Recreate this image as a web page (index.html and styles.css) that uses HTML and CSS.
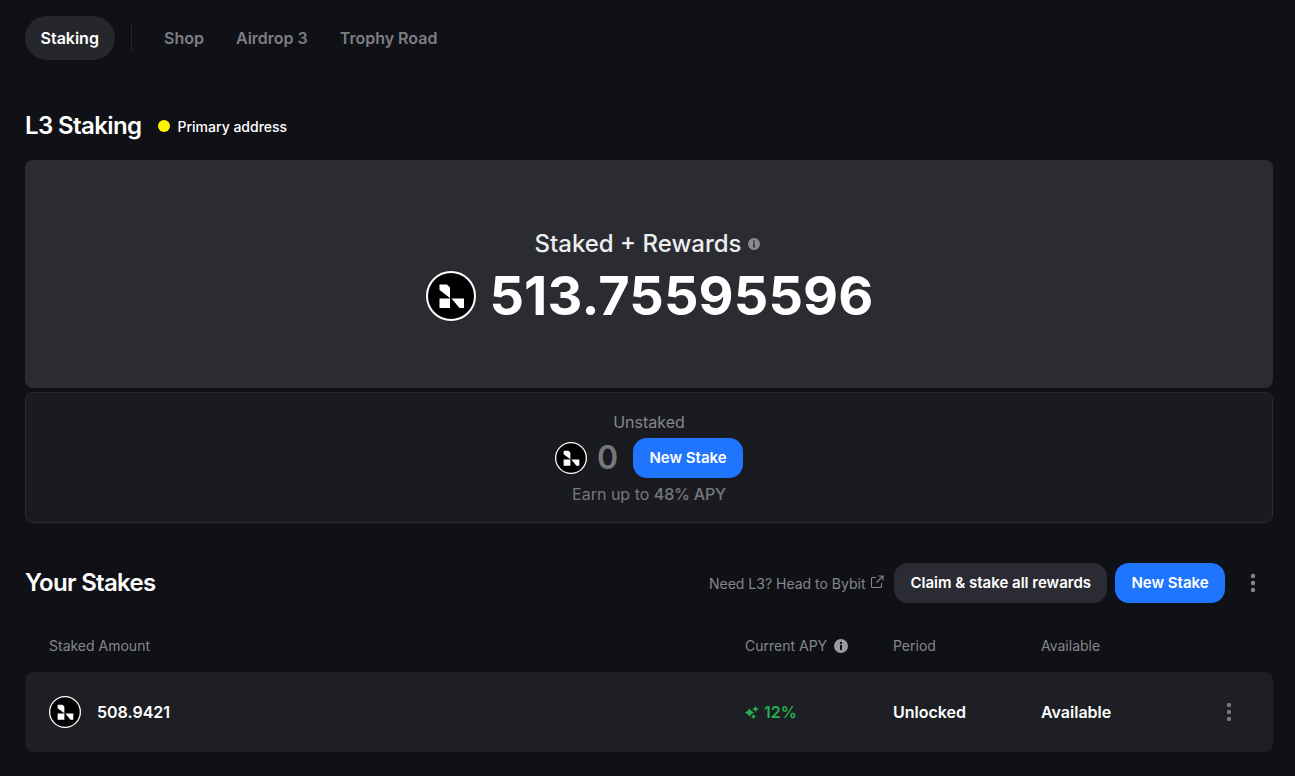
FILE: index.html
```html
<!DOCTYPE html>
<html lang="en">
<head>
<meta charset="utf-8">
<title>L3 Staking</title>
<link rel="stylesheet" href="styles.css">
</head>
<body>
<svg class="defs" width="0" height="0" aria-hidden="true">
  <symbol id="l3" viewBox="0 0 50 50">
    <circle cx="25" cy="25" r="24" fill="#000" stroke="#fff" stroke-width="2"/>
    <path fill="#fff" d="M13.500 13.500h7.500l3 3v10.500l-10.500-8zM13.500 27.500h10.500v9.500h-10.500zM25.500 27.500h12.500v9.500h-4.500z"/>
  </symbol>
  <symbol id="kebab" viewBox="0 0 6 20">
    <circle cx="3" cy="3" r="2.200"/><circle cx="3" cy="10" r="2.200"/><circle cx="3" cy="17" r="2.200"/>
  </symbol>
  <symbol id="info" viewBox="0 0 14 14">
    <path fill-rule="evenodd" d="M7 0a7 7 0 1 1 0 14A7 7 0 0 1 7 0zM6 6v5h2V6zM7 2.800a1.200 1.200 0 1 0 0 2.400 1.200 1.200 0 0 0 0-2.400z"/>
  </symbol>
</svg>
<nav class="nav">
  <a class="tab tab-active">Staking</a>
  <span class="nav-divider"></span>
  <a class="tab">Shop</a>
  <a class="tab">Airdrop 3</a>
  <a class="tab">Trophy Road</a>
</nav>
<header class="title-row">
  <h1 class="h-large">L3 Staking</h1>
  <span class="dot"></span>
  <span class="address">Primary address</span>
</header>
<section class="card-total">
  <div class="total-label">Staked + Rewards <svg class="info-small"><use href="#info"/></svg></div>
  <div class="total-value"><svg class="logo-large"><use href="#l3"/></svg><span>513.75595596</span></div>
</section>
<section class="card-unstaked">
  <div class="unstaked-label">Unstaked</div>
  <div class="unstaked-row">
    <svg class="logo-mid"><use href="#l3"/></svg>
    <span class="unstaked-value">0</span>
    <button class="btn btn-blue">New Stake</button>
  </div>
  <div class="earn">Earn up to <strong>48% APY</strong></div>
</section>
<section class="stakes-head">
  <h2 class="h-large h-tight">Your Stakes</h2>
  <div class="stakes-actions">
    <a class="bybit">Need L3? Head to Bybit
      <svg class="ext" viewBox="0 0 14 14" fill="none" stroke="currentColor" stroke-width="1.100"><path d="M6 2.500H2.500a1 1 0 0 0-1 1v8a1 1 0 0 0 1 1h8a1 1 0 0 0 1-1V8M8.500 1h4.500v4.500M13 1 6.500 7.500"/></svg>
    </a>
    <button class="btn btn-dark">Claim &amp; stake all rewards</button>
    <button class="btn btn-blue">New Stake</button>
    <svg class="kebab-head"><use href="#kebab"/></svg>
  </div>
</section>
<div class="grid table-head">
  <span>Staked Amount</span>
  <span class="apy-head">Current APY <svg class="info-head"><use href="#info"/></svg></span>
  <span>Period</span>
  <span>Available</span>
</div>
<div class="grid table-row">
  <span class="amount"><svg class="logo-small"><use href="#l3"/></svg>508.9421</span>
  <span class="apy">
    <svg class="spark" viewBox="0 0 14 13" fill="currentColor"><path d="M4.500 2.500 6.200 4.800 9 6.500 6.200 8.200 4.500 10.500 2.800 8.200 0 6.500 2.800 4.800zM10.500 0l1.100 1.900 2.400 1.100-2.400 1.100-1.100 1.900-1.100-1.900-2.400-1.100 2.400-1.100zM8.500 8l1 1.500 1.500 1-1.500 1-1 1.500-1-1.500-1.500-1 1.500-1z"/></svg>12%
  </span>
  <span>Unlocked</span>
  <span>Available</span>
  <svg class="kebab-row"><use href="#kebab"/></svg>
</div>
</body>
</html>
```

FILE: styles.css
```css
* { box-sizing: border-box; }
html, body { height: 100%; }
body {
  margin: 0;
  padding: 16px 22px 0 25px;
  background: #101116;
  color: #fff;
  font-family: Inter, "Liberation Sans", sans-serif;
  overflow: hidden;
}
.defs { position: absolute; }
.nav { display: flex; align-items: center; height: 44px; }
.tab {
  font-size: 16px;
  font-weight: 600;
  color: #7d7e84;
  padding: 0 16px;
  line-height: 44px;
}
.tab-active {
  color: #fff;
  background: #26272c;
  border-radius: 22px;
  padding: 0 16px 0 15.500px;
  width: 90px;
}
.nav-divider { width: 1px; height: 28px; background: #26272c; margin: 0 16px; }
.title-row { display: flex; align-items: center; margin-top: 50px; height: 32px; }
.h-large {
  margin: 0;
  font-size: 24px;
  font-weight: 600;
  letter-spacing: -0.6px;
  line-height: 32px;
}
.h-tight { letter-spacing: -0.7px; }
.dot { width: 12px; height: 12px; border-radius: 50%; background: #fff200; margin-left: 16px; }
.address { font-size: 14px; font-weight: 500; margin-left: 8px; }
.card-total {
  margin-top: 18px;
  height: 228px;
  background: #2b2c32;
  border-radius: 8px;
  display: flex;
  flex-direction: column;
  align-items: center;
  padding-top: 68px;
}
.total-label {
  display: flex;
  align-items: center;
  gap: 6px;
  font-size: 24px;
  font-weight: 500;
  line-height: 32px;
  color: #eeeef0;
  padding-right: 4px;
}
.info-small { width: 12px; height: 12px; fill: #8a8b90; }
.total-value {
  display: flex;
  align-items: center;
  gap: 13px;
  font-size: 54px;
  font-weight: 700;
  letter-spacing: 0.15px;
  line-height: 56px;
  margin-top: 8px;
  padding-left: 2px;
}
.logo-large { width: 50px; height: 50px; }
.card-unstaked {
  margin-top: 4px;
  height: 131px;
  background: #1a1b20;
  border: 1px solid #2a2b31;
  border-radius: 8px;
  display: flex;
  flex-direction: column;
  align-items: center;
  padding-top: 17px;
}
.unstaked-label { font-size: 16px; line-height: 24px; color: #85868c; }
.unstaked-row { display: flex; align-items: center; margin-top: 4px; height: 40px; }
.logo-mid { width: 32px; height: 32px; }
.unstaked-value { font-size: 32px; font-weight: 600; color: #77787e; margin: 0 15px 0 10px; line-height: 40px; }
.earn { font-size: 16px; line-height: 24px; color: #77787e; margin-top: 4px; }
.earn strong { font-weight: 500; letter-spacing: -0.2px; }
.stakes-head { display: flex; justify-content: space-between; align-items: center; margin-top: 40px; height: 40px; }
.stakes-actions { display: flex; align-items: center; }
.bybit {
  display: flex;
  align-items: center;
  gap: 5px;
  font-size: 14px;
  color: #85868c;
  margin-right: 10px;
}
.ext { width: 14px; height: 14px; margin-top: -3px; }
.btn {
  border: 0;
  height: 40px;
  padding: 0 16px;
  border-radius: 14px;
  color: #fff;
  font: 600 15px/40px Inter, "Liberation Sans", sans-serif;
  white-space: nowrap;
}
.btn-blue { background: #1f75fe; width: 110px; padding: 0; }
.btn-dark { background: #2b2c33; margin-right: 8px; }
.kebab-head { width: 6px; height: 20px; margin: 0 17px 0 25px; fill: #85868c; }
.grid {
  display: grid;
  grid-template-columns: 696px 148px 148px 1fr 24px;
  align-items: center;
  padding: 0 32px 0 24px;
}
.table-head { margin-top: 33px; height: 20px; font-size: 14px; line-height: 20px; color: #85868c; }
.apy-head { display: flex; align-items: center; gap: 7px; }
.info-head { width: 14px; height: 14px; fill: #9a9ba0; }
.table-row {
  margin-top: 16px;
  height: 80px;
  background: #1e1f25;
  border-radius: 8px;
  font-size: 16px;
  font-weight: 600;
}
.amount { display: flex; align-items: center; gap: 16px; }
.logo-small { width: 32px; height: 32px; }
.apy { display: flex; align-items: center; gap: 5px; color: #24b04e; }
.spark { width: 14px; height: 13px; }
.kebab-row { width: 6px; height: 20px; justify-self: center; fill: #77787e; }
```
